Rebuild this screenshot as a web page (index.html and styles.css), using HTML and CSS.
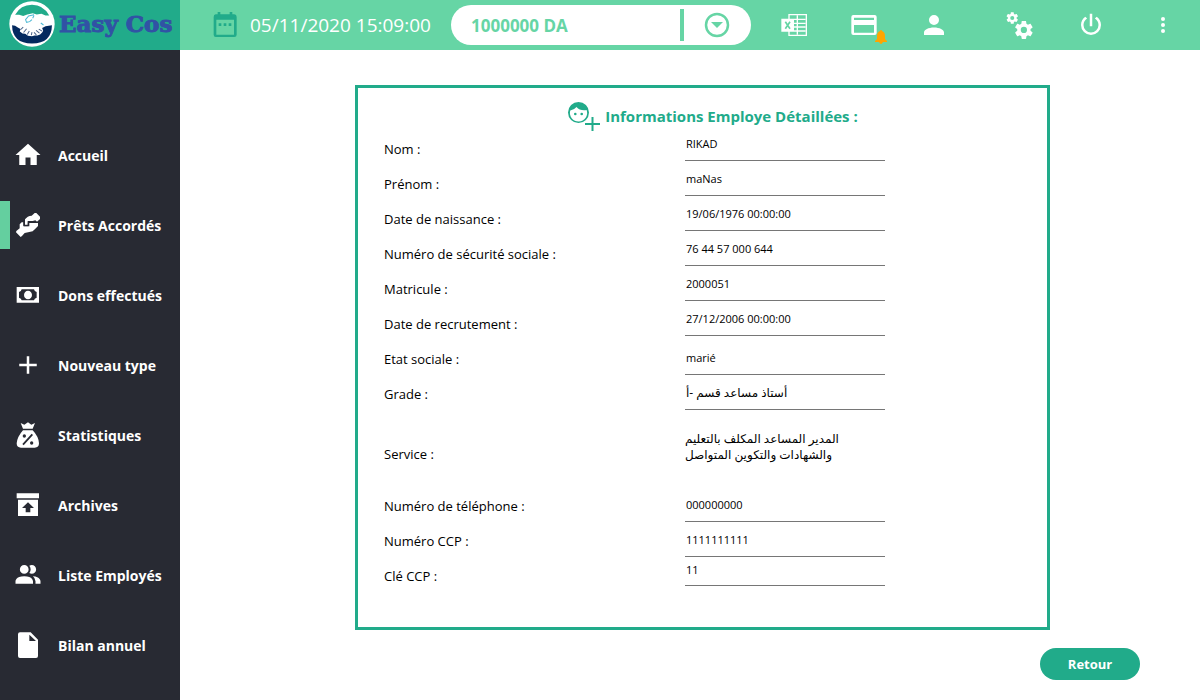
FILE: index.html
```html
<!DOCTYPE html>
<html lang="fr">
<head>
<meta charset="utf-8">
<meta name="viewport" content="width=device-width, initial-scale=1">
<title>Easy Cos</title>
<link rel="stylesheet" href="styles.css">
</head>
<body>
<div class="app">
  <aside class="sidebar">
    <a class="brand" href="#">
      <svg class="brand-logo" viewBox="6 5 136 136" aria-hidden="true">
        <circle cx="74" cy="73" r="67" fill="#fff"/>
        <path fill="#21ab8a" d="M24 46Q40 16 74 16Q108 16 125 48L114 48L102 43L88 45L76 41L60 45L48 49L36 46Z"/>
        <path fill="#03295e" d="M15 77L24 78L32 83L40 88L38 95L46 101L54 102L62 108L74 109L82 107L90 107L98 104L104 98L107 93L104 85L114 80L133 77Q132 131 74 131Q16 131 15 77Z"/>
        <path fill="none" stroke="#4db9d4" stroke-width="3" d="M80 46L64 49L55 60L58 68L67 66L74 60M80 48L76 56M100 70L108 76"/>
        <path fill="none" stroke="#4a6288" stroke-width="3" d="M40 90L48 82M49 98L58 87M60 104L66 94M72 106L74 97M80 98L87 105M86 92L96 100M94 88L104 94"/>
      </svg>
      <span class="brand-name">Easy Cos</span>
    </a>
    <nav class="menu">
      <a class="menu-item" href="#"><svg class="icon" viewBox="0 0 24 24"><path d="M10 20V14H14V20H19V12H22L12 3L2 12H5V20Z"/></svg><span>Accueil</span></a>
      <a class="menu-item active" href="#" aria-current="page"><svg class="icon" viewBox="39 240 90 90"><path d="M104 249H109L120 260V267L111 275L106 271L98 273H83V284H75V268Q82 258 95 257Z"/><path d="M48 307L62 321L66 318L74 309L98 304L106 296L114 288V279H88V289H70V277H65L59 283V295L49 303Z"/><path class="gap" d="M72 272V287H85V277H112"/></svg><span>Prêts Accordés</span></a>
      <a class="menu-item" href="#"><svg class="icon" viewBox="39 450 90 90"><path fill-rule="evenodd" d="M50 471H117V518H50ZM65 478Q64 484 57 486V503Q64 505 65 511H102Q103 505 110 503V486Q103 484 102 478Z"/><ellipse cx="84" cy="495" rx="12" ry="13"/></svg><span>Dons effectués</span></a>
      <a class="menu-item" href="#"><svg class="icon" viewBox="0 0 24 24"><path d="M19 13H13V19H11V13H5V11H11V5H13V11H19Z"/></svg><span>Nouveau type</span></a>
      <a class="menu-item" href="#"><svg class="icon" viewBox="39 240 90 90"><path d="M62 249L73 254L84 247L94 254L105 249L98 266H69Z"/><path fill-rule="evenodd" d="M69 271H98Q116 290 117 310Q117 323 104 323H63Q50 323 50 310Q52 290 69 271ZM95 281L67 312L71 316L99 285ZM73 283A5 5 0 1 0 73 293A5 5 0 1 0 73 283ZM95 304A5 5 0 1 0 95 314A5 5 0 1 0 95 304Z"/></svg><span>Statistiques</span></a>
      <a class="menu-item" href="#"><svg class="icon" viewBox="39 450 90 90"><path fill-rule="evenodd" d="M50 460H117V475H50ZM54 479H114V528H54ZM84 487L66 504H77V517H91V504H102Z"/></svg><span>Archives</span></a>
      <a class="menu-item" href="#"><svg class="icon" viewBox="0 0 24 24"><path d="M16 17V19H2V17S2 13 9 13 16 17 16 17M12.5 7.5A3.5 3.5 0 1 0 9 11A3.5 3.5 0 0 0 12.5 7.5M15.94 13A5.32 5.32 0 0 1 18 17V19H22V17S22 13.37 15.94 13M15 4A3.39 3.39 0 0 0 13.07 4.59A5 5 0 0 1 13.07 10.41A3.39 3.39 0 0 0 15 11A3.5 3.5 0 0 0 15 4Z"/></svg><span>Liste Employés</span></a>
      <a class="menu-item" href="#"><svg class="icon" viewBox="39 270 90 90"><path fill-rule="evenodd" d="M60 277H92L114 299V348Q114 354 108 354H60Q54 354 54 348V283Q54 277 60 277ZM88 284V303H108Z"/></svg><span>Bilan annuel</span></a>
    </nav>
  </aside>

  <div class="page">
    <header class="topbar">
      <svg class="icon calendar" viewBox="31 27 90 90"><path fill-rule="evenodd" d="M54 33H62V40H90V33H98V40H104Q111 41 111 48V101Q111 108 104 108H48Q42 108 42 101V48Q42 41 48 40H54ZM50 56V101H103V56Z"/><path d="M57 67H65V75H57ZM72 67H80V75H72ZM87 67H95V75H87Z"/></svg>
      <time class="clock" datetime="2020-11-05T15:09:00">05/11/2020 15:09:00</time>
      <div class="balance">
        <span class="balance-amount">1000000 DA</span>
        <button class="balance-toggle" type="button" aria-label="Détails du solde"><svg class="icon" viewBox="0 0 30 30"><circle class="ring" cx="15" cy="15" r="11"/><path d="M9 12H21L15 18Z"/></svg></button>
      </div>
      <div class="tools">
        <button class="tool" type="button" aria-label="Exporter vers Excel"><svg class="icon" viewBox="534 30 90 90"><path fill-rule="evenodd" d="M562 42H618V108H562ZM566 46V104H614V46Z"/><path d="M587 46H591V104H587ZM566 56H614V60H566ZM566 68H614V72H566ZM566 79H614V83H566ZM566 91H614V95H566ZM541 56H579V95H541Z"/><path class="cross" d="M553 65L567 86M567 65L553 86"/></svg></button>
        <button class="tool" type="button" aria-label="Paiements"><span class="badge-host"><svg class="icon" viewBox="750 30 90 90"><path fill-rule="evenodd" d="M763 45H827Q833 45 833 51V99Q833 105 827 105H763Q757 105 757 99V51Q757 45 763 45ZM765 53V60H825V53ZM765 75V98H825V75Z"/></svg><svg class="bell" viewBox="0 0 12 14"><path d="M6 0Q7 0 7 1Q10 2 10 6V9L12 11V12H0V11L2 9V6Q2 2 5 1Q5 0 6 0ZM4 12H8Q7 14 6 14Q5 14 4 12Z"/></svg></span></button>
        <button class="tool" type="button" aria-label="Profil"><svg class="icon" viewBox="0 0 24 24"><path d="M12 4A4 4 0 1 1 12 12A4 4 0 1 1 12 4M12 14C16.42 14 20 15.79 20 18V20H4V18C4 15.79 7.58 14 12 14Z"/></svg></button>
      </div>
      <div class="tools tools-wide">
        <button class="tool" type="button" aria-label="Paramètres"><svg class="icon" viewBox="0 0 30 30"><defs><path id="cog" d="M12 15.5A3.5 3.5 0 0 1 8.5 12A3.5 3.5 0 0 1 12 8.5A3.5 3.5 0 0 1 15.5 12A3.5 3.5 0 0 1 12 15.5M19.43 12.97C19.47 12.65 19.5 12.33 19.5 12C19.5 11.67 19.47 11.34 19.43 11L21.54 9.37C21.73 9.22 21.78 8.95 21.66 8.73L19.66 5.27C19.54 5.05 19.27 4.96 19.05 5.05L16.56 6.05C16.04 5.66 15.5 5.32 14.87 5.07L14.5 2.42C14.46 2.18 14.25 2 14 2H10C9.75 2 9.54 2.18 9.5 2.42L9.13 5.07C8.5 5.32 7.96 5.66 7.44 6.05L4.95 5.05C4.73 4.96 4.46 5.05 4.34 5.27L2.34 8.73C2.21 8.95 2.27 9.22 2.46 9.37L4.57 11C4.53 11.34 4.5 11.67 4.5 12C4.5 12.33 4.53 12.65 4.57 12.97L2.46 14.63C2.27 14.78 2.21 15.05 2.34 15.27L4.34 18.73C4.46 18.95 4.73 19.03 4.95 18.95L7.44 17.94C7.96 18.34 8.5 18.68 9.13 18.93L9.5 21.58C9.54 21.82 9.75 22 10 22H14C14.25 22 14.46 21.82 14.5 21.58L14.87 18.93C15.5 18.67 16.04 18.34 16.56 17.94L19.05 18.95C19.27 19.03 19.54 18.95 19.66 18.73L21.66 15.27C21.78 15.05 21.73 14.78 21.54 14.63Z"/></defs><use href="#cog" transform="translate(1.3 1) scale(.58)"/><use href="#cog" transform="translate(9.2 9.3) scale(.89)"/></svg></button>
        <button class="tool" type="button" aria-label="Déconnexion"><svg class="icon" viewBox="0 0 24 24"><path d="M16.56 5.44L15.11 6.89C16.84 7.94 18 9.83 18 12A6 6 0 0 1 12 18A6 6 0 0 1 6 12C6 9.83 7.16 7.94 8.88 6.88L7.44 5.44C5.36 6.88 4 9.28 4 12A8 8 0 0 0 12 20A8 8 0 0 0 20 12C20 9.28 18.64 6.88 16.56 5.44M13 3H11V13H13Z"/></svg></button>
        <button class="tool" type="button" aria-label="Plus d'options"><svg class="icon" viewBox="0 0 30 30"><circle cx="15" cy="9" r="2"/><circle cx="15" cy="15" r="2"/><circle cx="15" cy="21" r="2"/></svg></button>
      </div>
    </header>

    <main class="content">
      <form class="card">
        <h1 class="card-title"><svg class="face" viewBox="0 0 34 30"><path fill-rule="evenodd" d="M11.500 1A10.500 10.500 0 1 1 11.500 22A10.500 10.500 0 1 1 11.500 1ZM3.300 9.500A8.600 8.600 0 1 0 19.600 9Q13 10 9.500 6Q7 9 3.300 9.500Z"/><circle cx="8.300" cy="13" r="1.300"/><circle cx="14.700" cy="13" r="1.300"/><path d="M24.500 16H26.500V22H33V24H26.500V30H24.500V24H18V22H24.500Z"/></svg>Informations Employe Détaillées :</h1>
        <div class="row"><label for="nom">Nom :</label><input id="nom" value="RIKAD" readonly></div>
        <div class="row"><label for="prenom">Prénom :</label><input id="prenom" value="maNas" readonly></div>
        <div class="row"><label for="naissance">Date de naissance :</label><input id="naissance" value="19/06/1976 00:00:00" readonly></div>
        <div class="row"><label for="secu">Numéro de sécurité sociale :</label><input id="secu" value="76 44 57 000 644" readonly></div>
        <div class="row"><label for="matricule">Matricule :</label><input id="matricule" value="2000051" readonly></div>
        <div class="row"><label for="recrutement">Date de recrutement :</label><input id="recrutement" value="27/12/2006 00:00:00" readonly></div>
        <div class="row row-low"><label for="etat">Etat sociale :</label><input id="etat" value="marié" readonly></div>
        <div class="row row-low"><label for="grade">Grade :</label><input id="grade" dir="rtl" lang="ar" value="أستاذ مساعد قسم -أ" readonly></div>
        <div class="row row-tall"><label for="service">Service :</label><textarea id="service" dir="rtl" lang="ar" rows="2" readonly>المدير المساعد المكلف بالتعليم
والشهادات والتكوين المتواصل</textarea></div>
        <div class="row row-low"><label for="tel">Numéro de téléphone :</label><input id="tel" value="000000000" readonly></div>
        <div class="row row-low"><label for="ccp">Numéro CCP :</label><input id="ccp" value="1111111111" readonly></div>
        <div class="row row-last"><label for="cle">Clé CCP :</label><input id="cle" value="11" readonly></div>
      </form>
      <button class="back" type="button">Retour</button>
    </main>
  </div>
</div>
</body>
</html>
```
FILE: styles.css
```css
* { box-sizing: border-box; }

body {
  margin: 0;
  font-family: "Open Sans", "Noto Sans", "DejaVu Sans", sans-serif;
  background: #fff;
  color: #000;
}

button { border: 0; padding: 0; background: none; font: inherit; cursor: pointer; }

.app { display: flex; min-height: 100vh; }

.icon { display: block; flex: none; width: 30px; height: 30px; fill: currentColor; }

/* Sidebar */
.sidebar { flex: none; width: 180px; background: #282a33; }

.brand {
  display: flex;
  align-items: center;
  gap: 4px;
  height: 50px;
  padding: 0 0 2px 9px;
  background: #21ab8a;
  color: #3152a5;
  text-decoration: none;
}
.brand-logo { flex: none; width: 46px; height: 46px; }
.brand-name {
  font: bold 23px/28px "DejaVu Serif", serif;
  -webkit-text-stroke: 1px currentColor;
  white-space: nowrap;
}

.menu { display: flex; flex-direction: column; gap: 22px; padding-top: 81px; }
.menu-item {
  display: flex;
  align-items: center;
  gap: 15px;
  height: 48px;
  padding-left: 3px;
  border-left: 10px solid transparent;
  color: #fff;
  font-size: 14px;
  font-weight: 700;
  text-decoration: none;
  white-space: nowrap;
}
.menu-item.active { border-left-color: #64cf9f; }
.gap { fill: none; stroke: #282a33; stroke-width: 3; }

/* Top bar */
.page { flex: 1; min-width: 0; }
.topbar {
  display: flex;
  align-items: center;
  height: 50px;
  padding: 0 1px 0 30px;
  background: #66d5a5;
  color: #fff;
}
.calendar { color: #21ab8a; }
.clock { width: 201px; margin-left: 10px; font-size: 19px; white-space: nowrap; }
.balance {
  display: flex;
  align-items: center;
  width: 300px;
  height: 40px;
  padding: 0 19px 0 20px;
  border-radius: 20px;
  background: #fff;
  color: #66d5a5;
}
.balance-amount { flex: 1; font-size: 17px; font-weight: 700; }
.balance-toggle { height: 32px; padding-left: 18px; border-left: 4px solid #66d5a5; color: #66d5a5; }
.ring { fill: none; stroke: currentColor; stroke-width: 2.5; }

.tools { display: flex; margin-left: 8px; }
.tools-wide { margin-left: auto; }
.tool { display: flex; justify-content: center; width: 70px; color: #fff; }
.tools-wide .tool { width: 72px; }
.cross { fill: none; stroke: #66d5a5; stroke-width: 5; }
.badge-host { position: relative; }
.bell { position: absolute; right: -8px; bottom: -4px; width: 12px; height: 14px; fill: #ffa500; }

/* Employee details */
.content { display: flex; flex-direction: column; padding: 35px 60px 20px 175px; }
.card {
  margin-right: 90px;
  padding: 12px 26px 33px;
  border: 3px solid #21ab8a;
}
.card-title {
  display: flex;
  align-items: center;
  justify-content: center;
  gap: 4px;
  height: 32px;
  margin: 0;
  padding-left: 20px;
  color: #21ab8a;
  font-size: 15px;
  line-height: 20px;
  font-weight: 700;
}
.face { width: 34px; height: 30px; fill: currentColor; }

.row { display: grid; grid-template-columns: 301px 200px; align-items: start; height: 35px; }
.row label { font-size: 13px; line-height: 35px; }
.row input,
.row textarea {
  width: 100%;
  border: 0;
  border-radius: 0;
  outline: 0;
  background: none;
  color: #000;
  font: 11px/16px "Open Sans", "DejaVu Sans", sans-serif;
  text-align: left;
}
.row input { height: 29px; padding: 0 1px 6px; border-bottom: 1px solid #767676; }
.row-low input { margin-top: 4px; }
.row-last input { height: 27px; }
.row-tall { height: 77px; align-items: center; padding-top: 7px; }
.row textarea { height: 32px; margin-bottom: 14px; padding: 0; resize: none; overflow: hidden; }
.row [lang="ar"] { font-size: 12px; }

.back {
  align-self: flex-end;
  width: 100px;
  height: 32px;
  margin-top: 18px;
  border-radius: 16px;
  background: #21ab8a;
  color: #fff;
  font-size: 13px;
  font-weight: 700;
}
```
